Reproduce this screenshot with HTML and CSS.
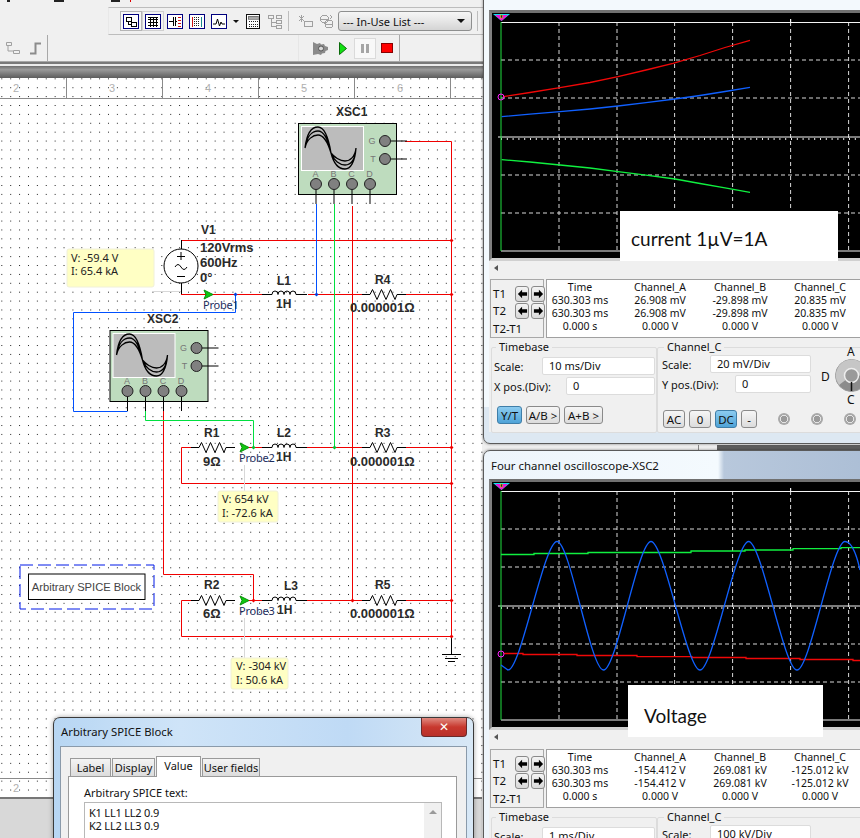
FILE: index.html
```html
<!DOCTYPE html>
<html lang="en">
<head>
<meta charset="utf-8">
<title>Multisim circuit with oscilloscopes</title>
<link rel="stylesheet" href="styles.css">
</head>
<body>
<div class="app">
  <div class="menuline"><i class="mk m1"></i><i class="mk m2"></i><i class="mk m3"></i><i class="mk m4"></i></div>
  <div class="tbar-top">
    <span class="slot pressed"><svg class="ico" viewBox="0 0 16 15"><rect x=".5" y=".5" width="15" height="14" class="ic-nv"/><rect x="3" y="3" width="5" height="4" class="ic-bk"/><rect x="8" y="8" width="5" height="4" class="ic-bk"/><path d="M5 7v3h3" class="ic-ln"/></svg></span>
    <span class="slot pressed lite"><svg class="ico" viewBox="0 0 16 15"><rect x=".5" y=".5" width="15" height="14" class="ic-nv"/><path d="M3 5h10M3 8h10M3 11h10M5 3v10M8 3v10M11 3v10M3 3h10" class="ic-ln"/></svg></span>
    <span class="slot"><svg class="ico" viewBox="0 0 16 15"><rect x=".5" y=".5" width="15" height="14" class="ic-nv"/><path d="M6 3v9M8 3v9M2 7.5h4M8 7.5h2" class="ic-ln"/><path d="M11 3h3M11 6h3M11 9h3M11 12h3" class="ic-rd"/></svg></span>
    <span class="slot"><svg class="ico" viewBox="0 0 16 15"><rect x=".5" y=".5" width="15" height="14" class="ic-nv"/><path d="M3 3v10" class="ic-rd"/><path d="M5.500 3v10M7.500 3v10M9.500 3v10" class="ic-dt"/><path d="M12 3v10" class="ic-bl"/></svg></span>
    <span class="slot"><svg class="ico" viewBox="0 0 16 15"><rect x=".5" y=".5" width="15" height="14" class="ic-nv"/><path d="M2 10h3l1.500-5 2 7 1.500-4 1 2h3" class="ic-wave"/></svg></span>
    <span class="drop"></span>
    <span class="slot"><svg class="ico" viewBox="0 0 16 15"><rect x="1.500" y=".5" width="13" height="14" class="ic-wt"/><rect x="3" y="2" width="10" height="3" class="ic-gy"/><path d="M3.500 7.500h9M3.500 10.500h9M3.500 12.500h9" class="ic-dt"/></svg></span>
    <span class="slot"><svg class="ico" viewBox="0 0 16 15"><path d="M1.500 1.500h5v3h-5zM9.500 1.500h5v3h-5zM9.500 6.500h5v3h-5zM9.500 11h5v3h-5zM4 4.500V12.500h5.500M4 8h5.500" class="ic-off"/></svg></span>
    <span class="sep"></span>
    <span class="slot"><svg class="ico" viewBox="0 0 16 15"><path d="M2 2l5 5M7 2L2 7M4.500 1v7M7 7h8M7 12.500h8M7 7v5.500M15 7v5.500" class="ic-off"/></svg></span>
    <span class="slot"><svg class="ico" viewBox="0 0 16 15"><circle cx="5.500" cy="5" r="4" class="ic-off"/><circle cx="10" cy="10" r="4" class="ic-off"/><path d="M1.500 5h8M6 10h8M11 1l2 2-2 2" class="ic-off"/></svg></span>
    <div class="combo"><span>--- In-Use List ---</span><i class="combo-arrow"></i></div>
    <span class="sep sep-end"></span>
  </div>
  <div class="tbar-row">
    <div class="tb-left">
      <svg class="ico-s" viewBox="0 0 14 13"><path d="M.5.5h5v3h-5zM7.500 8.500h6v3h-6zM2 4v5h5" class="ic-off"/></svg>
      <svg class="ico-s" viewBox="0 0 14 13"><path d="M1 11.500h5.500v-10H12" class="ic-step"/></svg>
    </div>
    <div class="tb-sim">
      <svg class="ico-gear" viewBox="0 0 17 15"><path d="M1 1l4 2 3-1 1 1.500 3-.5 1 2 3 1v3l-2.500 1-.5 2-3 .5-1 1.500-3-1L1 14z" class="gear"/><circle cx="9" cy="7.500" r="2.500" class="gear-c"/></svg>
      <svg class="ico-play" viewBox="0 0 8 13"><path d="M.5.500L7.500 6.500.5 12.500z" class="play"/></svg>
      <span class="pause"><i></i><i></i></span>
      <i class="stop"></i>
    </div>
  </div>
  <div class="tbar-rule"></div>

  <svg class="sheet" viewBox="0 66 860 772" width="860" height="772">
    <defs>
      <pattern id="dots" x="1.300" y="105" width="8.890" height="8.890" patternUnits="userSpaceOnUse"><rect width="1" height="1" class="dot"/></pattern>
      <linearGradient id="strip" x1="0" x2="0" y1="0" y2="1"><stop offset="0" stop-color="#6f6f6f"/><stop offset=".3" stop-color="#9a9a9a"/><stop offset="1" stop-color="#5c5c5c"/></linearGradient>
      <path id="res" d="M0 0H8l2.500-5 4.500 10 4.500-10 4.500 10 4.500-10 4.500 10 2-5H44" class="blk"/>
      <path id="coil" d="M0 0H10a3 3.500 0 0 1 6 0a3 3.500 0 0 1 6 0a3 3.500 0 0 1 6 0a3 3.500 0 0 1 6 0H45" class="blk"/>
      <path id="probe" d="M0-4.500L9 0 0 4.500 2 0z" class="prb"/>
      <path id="node" d="M-2 0L0-2 2 0 0 2z"/>
      <g id="xsc">
        <rect x=".5" y=".5" width="98" height="71" class="xbox"/>
        <rect x="3.500" y="3.500" width="62" height="44" class="xscr"/>
        <path d="M7 25C9 8 15 4 20 4C26 4 30 12 33 30C36 42 42 46 47 46C52 46 57 40 58 25M7 25C9 12 15 8 20 8C26 8 30 16 33 30C36 38 42 42 47 42C52 42 57 38 58 25M7 25C9 16 15 12 20 12C26 12 30 20 33 30C36 34 42 38 47 38C52 38 57 34 58 25" class="xwav"/>
        <text x="17.500" y="54" class="xl">A</text><text x="35.500" y="54" class="xl">B</text><text x="53.500" y="54" class="xl">C</text><text x="71.500" y="54" class="xl">D</text>
        <text x="74" y="21" class="xl">G</text><text x="75" y="39" class="xl">T</text>
        <path d="M18 61V81M36 61V81M54 61V81M72 61V81M87 18h22M87 36h22" class="blk"/>
        <circle cx="18" cy="61" r="5.500" class="xp"/><circle cx="36" cy="61" r="5.500" class="xp"/><circle cx="54" cy="61" r="5.500" class="xp"/><circle cx="72" cy="61" r="5.500" class="xp"/>
        <circle cx="87" cy="18" r="5.500" class="xp"/><circle cx="87" cy="36" r="5.500" class="xp"/>
      </g>
      <g id="al"><path d="M1 6l5-5v3h6v4H6v3z"/></g>
      <g id="ar"><path d="M12 6L7 1v3H1v4h6v3z"/></g>
      <g id="scgrid">
        <path d="M58 0V229M116 0V229M173.600 0V229M231.600 0V229M289.600 0V229M347.600 0V229M0 38H360M0 76H360M0 153H360M0 191H360" class="g-dash"/>
        <path d="M0 .5H360M0 229H360M-3 115H360M289.600-3V0" class="g-sol"/>
        <path d="M0 117H360" class="g-tick"/>
        <path d="M0 0V229" class="g-cur"/>
        <path d="M-8-8H9L.5-1z" class="g-cy"/><path d="M-6-7H7L.5-1z" class="g-mg"/><rect x="-.5" y="-7" width="2" height="3" class="g-yl"/>
      </g>
    </defs>
    <!-- paper -->
    <rect x="0" y="66" width="860" height="12" fill="url(#strip)"/>
    <rect x="0" y="78" width="482" height="700" class="paper"/>
    <rect x="0" y="78" width="720" height="700" fill="url(#dots)"/>
    <rect x="717" y="445" width="143" height="5" class="back"/>
    <path d="M.0 98.500H482M66.500 78V98M162.500 78V98M258.500 78V98M354.500 78V98M450.500 78V98M698.500 445V450" class="rule"/>
    <text x="16" y="92" class="rn">2</text><text x="112" y="92" class="rn">3</text><text x="208" y="92" class="rn">4</text><text x="304" y="92" class="rn">5</text><text x="400" y="92" class="rn">6</text>
    <rect x="0" y="778" width="482" height="20" class="paper"/>
    <rect x="0" y="778" width="482" height="20" fill="url(#dots)"/>
    <path d="M0 778.500H482" class="rule"/>
    <text x="16" y="792" class="rn">2</text>
    <rect x="0" y="798" width="482" height="40" class="botbar"/>
    <path d="M0 798H482" class="botline"/>

    <!-- wiring -->
    <g class="w-r">
      <path d="M181 240.500H451M405 141.500H451.500V636M352.500 206V600.500M181 294.500H262M308 294.500H362M406 294.500H451"/>
      <path d="M191 447.500H181.500V483.500H451M248 447.500H262M307 447.500H362M406 447.500H451"/>
      <path d="M191 600.500H181.500V636.500H451M248 600.500H262M307 600.500H362M406 600.500H451M163.500 411V574.500H253.500V600"/>
    </g>
    <path d="M334.500 204V447M145.500 411V420.500H253.500V447" class="w-g"/>
    <path d="M316.500 204V294M235.500 294V312.500H73.500V411.500H127.500" class="w-b"/>
    <path d="M181.500 240V249M181.500 283V294M451.500 636V654M442 654.500H461M445 658.500H458M448 661.500H455" class="blk"/>

    <use href="#xsc" x="298" y="123"/>
    <use href="#xsc" x="109.500" y="330"/>

    <!-- source -->
    <circle cx="181" cy="266" r="17" class="src"/>
    <path d="M177 256.500h8M181 252v8M177 276.500h8M175 267q3-5 6 0t6 0" class="blk"/>

    <use href="#coil" x="262" y="294.500"/><use href="#res" x="362" y="294.500"/>
    <use href="#res" x="191" y="447.500"/><use href="#coil" x="262" y="447.500"/><use href="#res" x="362" y="447.500"/>
    <use href="#res" x="191" y="600.500"/><use href="#coil" x="262" y="600.500"/><use href="#res" x="362" y="600.500"/>
    <use href="#probe" x="204" y="294.500"/><use href="#probe" x="240" y="447.500"/><use href="#probe" x="240" y="600.500"/>

    <g class="n-r"><use href="#node" x="451.500" y="240.500"/><use href="#node" x="451.500" y="294.500"/><use href="#node" x="451.500" y="447.500"/><use href="#node" x="451.500" y="483.500"/><use href="#node" x="451.500" y="600.500"/><use href="#node" x="451.500" y="636.500"/><use href="#node" x="253.500" y="600.500"/><use href="#node" x="352.500" y="600.500"/></g>
    <g class="n-g"><use href="#node" x="334.500" y="447.500"/><use href="#node" x="253.500" y="447.500"/></g>
    <g class="n-b"><use href="#node" x="316.500" y="294.500"/><use href="#node" x="235.500" y="294.500"/></g>

    <!-- labels -->
    <g class="lb">
      <text x="336" y="116">XSC1</text><text x="147" y="323">XSC2</text>
      <text x="201" y="234">V1</text>
      <text x="204" y="437">R1</text><text x="204" y="589">R2</text>
      <text x="277" y="285">L1</text><text x="277" y="437">L2</text><text x="284" y="590">L3</text>
      <text x="375" y="284">R4</text><text x="375" y="437">R3</text><text x="375" y="589">R5</text>
      <text x="276" y="308">1H</text><text x="276" y="461">1H</text><text x="277" y="614">1H</text>
    </g>
    <g class="lb lb-l">
      <text x="200" y="252">120Vrms</text><text x="200" y="267">600Hz</text><text x="200" y="282">0°</text>
      <text x="203" y="466">9Ω</text><text x="203" y="618">6Ω</text>
      <text x="350" y="312">0.000001Ω</text><text x="350" y="466">0.000001Ω</text><text x="350" y="618">0.000001Ω</text>
    </g>
    <g class="pl"><text x="203" y="309">Probe1</text><text x="239" y="462">Probe2</text><text x="239" y="615">Probe3</text></g>

    <!-- probe callouts -->
    <path d="M153 291.500H181M244.500 465V491M244.500 618V658" class="lead"/>
    <rect x="67" y="249" width="87" height="38" rx="2" class="tip"/>
    <rect x="218" y="491" width="60" height="31" rx="2" class="tip"/>
    <rect x="231" y="658" width="57" height="31" rx="2" class="tip"/>
    <g class="tt">
      <text x="71" y="262">V: -59.4 V</text><text x="71" y="275">I: 65.4 kA</text>
      <text x="222" y="503">V: 654 kV</text><text x="222" y="517">I: -72.6 kA</text>
      <text x="236" y="670">V: -304 kV</text><text x="236" y="684">I: 50.6 kA</text>
    </g>

    <!-- spice block -->
    <rect x="20" y="565" width="134" height="44" class="dash"/>
    <rect x="28.500" y="574" width="116.500" height="25.500" class="spbox"/>
    <text x="86.500" y="591" class="sptext">Arbitrary SPICE Block</text>
  </svg>

  <!-- oscilloscope XSC1 -->
  <section class="scope scope-a">
    <div class="scope-title"></div>
    <div class="scope-client">
      <div class="screen">
        <svg viewBox="492 13 368 245" width="368" height="245">
          <rect x="492" y="13" width="368" height="245" class="sc-bg"/>
          <use href="#scgrid" x="501" y="22"/>
          <path d="M503 96.700L530 92.500 560 87.700 590 82.500 618 76.700 646 70 673 63.300 700 55.500 725 47.500 750 40.300" class="tr-r"/>
          <path d="M501.700 116.700L530 114.200 560 111.700 590 109 618 106 646 102.700 675 99 700 95.500 725 91.500 750 87.300" class="tr-b"/>
          <path d="M501.700 159.700L530 162 560 165 590 168 618 171.700 646 175.200 675 179 700 183.500 725 187.800 750 192.300" class="tr-g"/>
          <circle cx="501" cy="97" r="3" class="tr-m"/>
        </svg>
      </div>
      <div class="hscroll"><i></i></div>
      <div class="readouts">
        <div class="tbox">
          <span class="t-l">T1</span><button class="ab"><svg viewBox="0 0 13 12"><use href="#al"/></svg></button><button class="ab"><svg viewBox="0 0 13 12"><use href="#ar"/></svg></button>
          <span class="t-l">T2</span><button class="ab"><svg viewBox="0 0 13 12"><use href="#al"/></svg></button><button class="ab"><svg viewBox="0 0 13 12"><use href="#ar"/></svg></button>
          <span class="t-l t-w">T2-T1</span>
        </div>
        <div class="table"><div class="tgrid">
          <span>Time</span><span>Channel_A</span><span>Channel_B</span><span>Channel_C</span>
          <span>630.303 ms</span><span>26.908 mV</span><span>-29.898 mV</span><span>20.835 mV</span>
          <span>630.303 ms</span><span>26.908 mV</span><span>-29.898 mV</span><span>20.835 mV</span>
          <span>0.000 s</span><span>0.000 V</span><span>0.000 V</span><span>0.000 V</span>
        </div></div>
      </div>
      <div class="controls">
        <fieldset class="grp grp-tb"><legend>Timebase</legend>
          <div class="frow"><label>Scale:</label><span class="inp inp-w">10 ms/Div</span></div>
          <div class="frow"><label>X pos.(Div):</label><span class="inp">0</span></div>
          <div class="brow"><button class="btn on w25">Y/T</button><button class="btn w34">A/B &gt;</button><button class="btn w39">A+B &gt;</button></div>
        </fieldset>
        <fieldset class="grp grp-ch"><legend>Channel_C</legend>
          <div class="ch-top">
            <div class="ch-fields">
              <div class="frow"><label>Scale:</label><span class="inp inp-w2">20 mV/Div</span></div>
              <div class="frow"><label>Y pos.(Div):</label><span class="inp inp-s">0</span></div>
            </div>
            <div class="selector"><span class="sa">A</span><span class="sd">D</span>
              <svg class="knob" viewBox="0 0 33 33"><circle cx="16.500" cy="16.500" r="16" class="k1"/><path d="M16.500 16.500L4 26A16 16 0 0 1 16.500.5 16 16 0 0 1 32.500 16.500z" class="k2"/><circle cx="16.500" cy="16.500" r="7" class="k3"/><path d="M16.500 23V32" class="k4"/></svg>
              <span class="sc">C</span></div>
          </div>
          <div class="brow brow-c"><button class="btn w22">AC</button><button class="btn w22">0</button><button class="btn on w22">DC</button><button class="btn w16">-</button>
            <i class="rad r1"></i><i class="rad"></i><i class="rad"></i></div>
        </fieldset>
      </div>
    </div>
    <div class="note note-a">current 1µV=1A</div>
  </section>

  <!-- oscilloscope XSC2 -->
  <section class="scope scope-b">
    <div class="scope-title glass">Four channel oscilloscope-XSC2</div>
    <div class="scope-client">
      <div class="screen">
        <svg viewBox="492 482 368 245" width="368" height="245">
          <rect x="492" y="482" width="368" height="245" class="sc-bg"/>
          <use href="#scgrid" x="501" y="491"/>
          <path d="M501 554.500H534V553.500H588V552.500H691V551H745V550H793V548.700H841V547.700H860" class="tr-g"/>
          <path d="M504 653.500H523V654.500H577V655.500H637V656.700H692V657.500H746V658.500H800V659.500H853V660.500H860" class="tr-r"/>
          <path d="M501 665L508 670C521 670 544 541.500 557 541.500C570 541.500 590.500 670 603.500 670C616.500 670 638 541.500 651 541.500C664 541.500 687 670 700 670C713 670 735.600 541.500 748.600 541.500C761.600 541.500 784 670 797 670C810 670 832 541.500 845 541.500C851 541.500 856 552 860 570" class="tr-b"/>
          <circle cx="501" cy="654" r="3" class="tr-m"/>
        </svg>
      </div>
      <div class="hscroll hscroll-b"><i></i></div>
      <div class="readouts">
        <div class="tbox">
          <span class="t-l">T1</span><button class="ab"><svg viewBox="0 0 13 12"><use href="#al"/></svg></button><button class="ab"><svg viewBox="0 0 13 12"><use href="#ar"/></svg></button>
          <span class="t-l">T2</span><button class="ab"><svg viewBox="0 0 13 12"><use href="#al"/></svg></button><button class="ab"><svg viewBox="0 0 13 12"><use href="#ar"/></svg></button>
          <span class="t-l t-w">T2-T1</span>
        </div>
        <div class="table"><div class="tgrid">
          <span>Time</span><span>Channel_A</span><span>Channel_B</span><span>Channel_C</span>
          <span>630.303 ms</span><span>-154.412 V</span><span>269.081 kV</span><span>-125.012 kV</span>
          <span>630.303 ms</span><span>-154.412 V</span><span>269.081 kV</span><span>-125.012 kV</span>
          <span>0.000 s</span><span>0.000 V</span><span>0.000 V</span><span>0.000 V</span>
        </div></div>
      </div>
      <div class="controls">
        <fieldset class="grp grp-tb"><legend>Timebase</legend>
          <div class="frow"><label>Scale:</label><span class="inp inp-w">1 ms/Div</span></div>
        </fieldset>
        <fieldset class="grp grp-ch"><legend>Channel_C</legend>
          <div class="ch-top">
            <div class="ch-fields">
              <div class="frow"><label>Scale:</label><span class="inp inp-w2">100 kV/Div</span></div>
            </div>
          </div>
        </fieldset>
      </div>
    </div>
    <div class="note note-b">Voltage</div>
  </section>

  <!-- properties dialog -->
  <section class="dialog">
    <div class="dlg-title"><span>Arbitrary SPICE Block</span><button class="dlg-close">✕</button></div>
    <div class="dlg-client">
      <div class="tabs"><span class="tab t1">Label</span><span class="tab t2">Display</span><span class="tab active">Value</span><span class="tab t4">User fields</span></div>
      <div class="tabpanel">
        <div class="spice-label">Arbitrary SPICE text:</div>
        <div class="spice-text">
          <div class="spice-lines">K1 LL1 LL2 0.9<br>K2 LL2 LL3 0.9</div>
          <div class="vscroll"><i></i></div>
        </div>
      </div>
    </div>
  </section>
</div>
</body>
</html>
```

FILE: styles.css
```css
* { box-sizing: border-box; }
html, body { margin: 0; padding: 0; }
body { width: 860px; height: 838px; overflow: hidden; background: #f0f0f0; font-family: "Noto Sans", "Open Sans", sans-serif; }
.app { position: relative; width: 860px; height: 838px; overflow: hidden; background: #f0f0f0; display: flex; flex-direction: column; color: #111; }

/* toolbars */
.menuline { height: 7px; position: relative; flex: none; }
.mk { position: absolute; top: 0; height: 2px; background: #222; }
.m1 { left: 7px; width: 3px; } .m2 { left: 54px; width: 10px; } .m3 { left: 111px; width: 9px; } .m4 { left: 130px; width: 1px; background: #d00; }
.tbar-top { flex: none; height: 28px; margin-left: 108px; padding-left: 11px; display: flex; align-items: center; border-top: 1px solid #bdbdbd; border-bottom: 1px solid #bdbdbd; border-left: 1px solid #e8e8e8; }
.slot { width: 22px; height: 20px; display: flex; align-items: center; justify-content: center; border: 1px solid transparent; flex: none; }
.pressed { border: 1px solid #b5b5b5; background: #f6f6f6; }
.lite { background: #f2f2f2; border-color: #d0d0d0; }
.ico { width: 16px; height: 15px; display: block; shape-rendering: crispEdges; }
.drop { width: 0; height: 0; border-left: 3px solid transparent; border-right: 3px solid transparent; border-top: 3px solid #111; margin: 0 3px 0 3px; flex: none; }
.sep { width: 1px; height: 20px; background: #bdbdbd; margin: 0 5px 0 2px; flex: none; }
.sep-end { margin-left: 5px; }
.ic-nv { fill: #fff; stroke: #00007e; stroke-width: 1.500; }
.ic-bk { fill: #fff; stroke: #000; stroke-width: 1; }
.ic-ln { fill: none; stroke: #000; stroke-width: 1; }
.ic-wave { fill: none; stroke: #000; stroke-width: 1; shape-rendering: auto; }
.ic-rd { fill: none; stroke: #d01010; stroke-width: 1; }
.ic-bl { fill: none; stroke: #1a8a8a; stroke-width: 1; }
.ic-dt { fill: none; stroke: #222; stroke-width: 1; stroke-dasharray: 1 1; }
.ic-wt { fill: #fff; stroke: #111; stroke-width: 1; }
.ic-gy { fill: #aaa; stroke: #555; stroke-width: .6; }
.ic-off { fill: none; stroke: #a0a0a0; stroke-width: 1; }
.combo { width: 134px; height: 20px; flex: none; border: 1px solid #8e8f8f; border-radius: 3px; background: linear-gradient(#f6f6f6, #e8e8e8 45%, #d4d4d4); display: flex; align-items: center; justify-content: space-between; padding: 0 6px 0 4px; font-size: 11px; }
.combo-arrow { width: 0; height: 0; border-left: 4px solid transparent; border-right: 4px solid transparent; border-top: 4px solid #111; }
.tbar-row { flex: none; height: 27px; display: flex; border-bottom: 1px solid #a8a8a8; }
.tb-left { width: 48px; border-right: 1px solid #a8a8a8; display: flex; align-items: center; padding-left: 6px; gap: 9px; background: #f0f0f0; }
.ico-s { width: 14px; height: 13px; display: block; }
.ic-step { fill: none; stroke: #8c8c8c; stroke-width: 2; }
.tb-sim { margin-left: 250px; width: 102px; display: flex; align-items: center; border-left: 1px solid #e6e6e6; border-right: 1px solid #a8a8a8; padding-left: 13px; }
.ico-gear { width: 17px; height: 15px; display: block; }
.gear { fill: #8a8a8a; }
.gear-c { fill: #d8d8d8; stroke: #555; stroke-width: 1; }
.ico-play { width: 8px; height: 13px; margin-left: 10px; display: block; }
.play { fill: #11e011; stroke: #0a6a0a; stroke-width: 1; }
.pause { width: 22px; height: 21px; margin-left: 7px; border: 1px solid #dadada; background: #f8f8f8; display: flex; align-items: center; justify-content: center; gap: 2px; }
.pause i { width: 3px; height: 9px; background: #a5a5a5; }
.stop { width: 10px; height: 8px; margin-left: 6px; background: #f00; outline: 1px solid #800; }
.tbar-rule { flex: none; height: 4px; border-top: 2px solid #7a7a7a; background: #ececec; }

/* schematic sheet */
.sheet { display: block; flex: none; }
.paper { fill: #fff; }
.dot { fill: #222; }
.back { fill: #5e5e5e; }
.botbar { fill: #d8d8d8; }
.botline { stroke: #777; stroke-width: 2; }
.rule { stroke: #8a8a8a; stroke-width: 1; fill: none; }
.rn { font: 11px "Liberation Sans", sans-serif; fill: #b0b0b0; text-anchor: middle; }
.blk { fill: none; stroke: #000; stroke-width: 1; }
.w-r { fill: none; stroke: #f00000; stroke-width: 1; }
.w-g { fill: none; stroke: #00e040; stroke-width: 1; }
.w-b { fill: none; stroke: #0050ff; stroke-width: 1; }
.n-r { fill: #f00000; } .n-g { fill: #00c030; } .n-b { fill: #0040e0; }
.xbox { fill: #bedcbe; stroke: #000; stroke-width: 1; }
.xscr { fill: #bcbcbc; stroke: #fff; stroke-width: 1; }
.xwav { fill: none; stroke: #000; stroke-width: 1.300; }
.xl { font: 9px "Liberation Sans", sans-serif; fill: #777; text-anchor: middle; }
.xp { fill: #808080; stroke: #222; stroke-width: 1; }
.src { fill: #fff; stroke: #000; stroke-width: 1; }
.prb { fill: #10c810; stroke: #0a900a; stroke-width: 1; }
.lb text { font: bold 12px "Liberation Sans", sans-serif; fill: #2a2a2a; }
.lb-l text { font-size: 13px; }
.pl text { font: 11px "Noto Sans", sans-serif; fill: #1c2c5c; letter-spacing: -.2px; }
.lead { fill: none; stroke: #d8d8d8; stroke-width: 1; }
.tip { fill: #ffffc4; stroke: #f0f0d8; stroke-width: 1; }
.tt text { font: 11px "Noto Sans", sans-serif; fill: #222; }
.dash { fill: none; stroke: #0018e8; stroke-width: 1; stroke-dasharray: 13 5; }
.spbox { fill: #fff; stroke: #000; stroke-width: 1; }
.sptext { font: 11.200px "Liberation Sans", sans-serif; fill: #444; text-anchor: middle; }

/* oscilloscope windows */
.scope { position: absolute; left: 483px; width: 420px; border: 1px solid #5a5a5a; border-radius: 7px; background: linear-gradient(90deg, #eef5fb 0, #f4fafe 234px, #b8c8dc 240px, #a9bcd4 100%); box-shadow: 0 0 3px rgba(0,0,0,.45); padding: 0 0 11px 5px; display: flex; flex-direction: column; }
.scope-a { top: -19px; height: 463px; background: linear-gradient(#f3f9fd 0, #f3f9fd 425px, #dde8f2 425px); }
.scope-b { top: 450px; height: 470px; }
.scope-title { height: 28px; flex: none; font-size: 11.400px; line-height: 29px; padding-left: 2px; color: #111; }
.scope-client { flex: 1; background: #f0f0f0; display: flex; flex-direction: column; min-height: 0; }
.screen { flex: none; height: 251px; border: 3px solid; border-color: #707070 #c8c8c8 #d0d0d0 #808080; border-right: 0; background: #000; overflow: hidden; }
.screen svg { display: block; }
.sc-bg { fill: #000; }
.g-dash { fill: none; stroke: #d8d8d8; stroke-width: 1; stroke-dasharray: 4 3; }
.g-sol { fill: none; stroke: #f4f4f4; stroke-width: 1.200; }
.g-tick { fill: none; stroke: #e8e8e8; stroke-width: 2; stroke-dasharray: 1 4.800; }
.g-cur { fill: none; stroke: #20e040; stroke-width: 1; }
.g-cy { fill: #10e0f0; } .g-mg { fill: #f010d0; } .g-yl { fill: #222; stroke: #ee0; stroke-width: .5; }
.tr-r, .tr-b, .tr-g { fill: none; stroke-width: 1.300; }
.tr-r { stroke: #f00808; } .tr-b { stroke: #1060ff; } .tr-g { stroke: #10f040; }
.tr-m { fill: none; stroke: #ff20ff; stroke-width: 1; }
.hscroll { flex: none; height: 14px; display: flex; align-items: center; padding-left: 5px; border-bottom: 0; }
.hscroll-b { margin-bottom: 1px; }
.hscroll i { width: 0; height: 0; border-top: 3px solid transparent; border-bottom: 3px solid transparent; border-right: 4px solid #555; }
.readouts { flex: none; height: 59px; margin-top: 4px; margin-left: 1px; display: flex; gap: 2px; }
.tbox { width: 54px; height: 59px; border: 1px solid #a8a8a8; background: #f0f0f0; display: grid; grid-template-columns: 21px 15px 15px; grid-auto-rows: 17px; column-gap: 1px; padding: 6px 0 0 2px; font-size: 11.500px; }
.t-l { line-height: 16px; }
.t-w { grid-column: 1 / -1; line-height: 18px; height: 18px; margin-top: 0; }
.ab { width: 14px; height: 16px; padding: 0; border: 1px solid #8a8a8a; border-radius: 3px; background: linear-gradient(#f4f4f4, #d8d8d8); display: flex; align-items: center; justify-content: center; }
.ab svg { width: 11px; height: 10px; display: block; }
.table { flex: 1; min-width: 0; height: 59px; background: #fff; border: 1px solid #a0a0a0; border-right: 0; overflow: hidden; }
.tgrid { width: 340px; margin-left: -7px; padding-top: 1px; display: grid; grid-template-columns: repeat(4, 80px); grid-auto-rows: 13px; font-size: 10.500px; line-height: 13px; text-align: center; white-space: nowrap; }
.controls { flex: none; display: flex; margin: 2px 0 0 2px; }
.grp { margin: 0; border: 1px solid #dcdcdc; border-radius: 2px; font-size: 11.500px; min-width: 0; flex: none; }
.grp legend { padding: 0 3px; margin-left: 2px; line-height: 14px; font-size: 11px; }
.grp-tb { width: 166px; height: 93px; padding: 3px 1px 0 2px; }
.grp-ch { width: 210px; height: 93px; padding: 1px 0 0 4px; }
.frow { display: flex; height: 18px; margin-bottom: 2px; align-items: center; justify-content: space-between; white-space: nowrap; font-size: 11px; }
.inp { width: 89px; height: 18px; background: #fff; border: 1px solid #dcdcdc; border-radius: 2px; padding-left: 6px; line-height: 16px; font-size: 11px; }
.inp-w { width: 113px; }
.ch-fields { width: 149px; flex: none; }
.inp-w2 { width: 101px; }
.inp-s { width: 76px; }
.brow { display: flex; gap: 4px; margin: 11px 0 0 3px; align-items: center; }
.brow-c { margin: 17px 0 0 1px; }
.btn { height: 18px; padding: 0; font: 11.500px "Noto Sans", sans-serif; color: #111; border: 1px solid #8a8a8a; border-radius: 3px; background: linear-gradient(#f6f6f6, #dcdcdc); white-space: nowrap; }
.on { background: linear-gradient(#8ccbf0, #4fa3d8); border-color: #3f7ea8; }
.w25 { width: 25px; } .w34 { width: 34px; } .w39 { width: 39px; } .w22 { width: 22px; } .w16 { width: 16px; }
.ch-top { display: flex; height: 38px; }
.selector { flex: none; width: 60px; height: 60px; margin: -9px 0 0 10px; display: grid; grid-template-columns: 12px 48px; grid-template-rows: 12px 36px 12px; font-size: 12px; }
.sa { grid-column: 2; grid-row: 1; padding-left: 14px; line-height: 12px; }
.sd { grid-column: 1; grid-row: 2; align-self: center; }
.knob { grid-column: 2; grid-row: 2; width: 33px; height: 33px; margin: 1px 0 0 2px; display: block; }
.sc { grid-column: 2; grid-row: 3; padding-left: 14px; line-height: 12px; }
.k1 { fill: #8c8c8c; stroke: #999; } .k2 { fill: #c6c6c6; } .k3 { fill: #9a9a9a; stroke: #eee; stroke-width: 1.500; } .k4 { stroke: #111; stroke-width: 1.500; }
.rad { width: 12px; height: 12px; border-radius: 50%; margin-left: 17px; background: radial-gradient(circle, #9a9a9a 0 3px, #e4e4e4 3px 4px, #a8a8a8 4px 6px); flex: none; }
.r1 { margin-left: 17px; }
.note { position: absolute; background: #fff; font-family: Lato, "Noto Sans", sans-serif; font-size: 19px; color: #111; display: flex; align-items: flex-start; }
.note-a { left: 136px; top: 229px; width: 218px; height: 50px; padding: 16px 0 0 11px; }
.note-b { left: 144px; top: 234px; width: 195px; height: 52px; padding: 19px 0 0 16px; }

/* dialog */
.dialog { position: absolute; left: 53px; top: 717px; width: 421px; height: 140px; border: 1px solid #3a3a3a; border-radius: 7px 7px 0 0; background: linear-gradient(90deg, #b7d6f3, #cfe4f8 30%, #bfdaf5 70%, #d8e8f6); padding: 0 6px; box-shadow: 0 0 5px rgba(0,0,0,.35); }
.dlg-title { height: 28px; display: flex; align-items: flex-start; justify-content: space-between; font-size: 11.300px; color: #111; }
.dlg-title span { padding: 5px 0 0 1px; line-height: 18px; }
.dlg-close { width: 46px; height: 19px; margin-top: 0; border: 1px solid #6a2a2a; border-top: 0; border-radius: 0 0 4px 4px; background: linear-gradient(#e08a80, #c8382e 50%, #b8302a); color: #fff; font: bold 12px "DejaVu Sans", sans-serif; padding: 0; line-height: 17px; }
.dlg-client { height: 110px; background: #f0f0f0; border: 1px solid #8a9aaa; padding: 10px 9px 0 7px; }
.tabs { display: flex; height: 19px; align-items: flex-end; padding-left: 2px; gap: 1px; font-size: 11px; }
.tab { height: 18px; border: 1px solid #9a9a9a; border-bottom: 0; background: linear-gradient(#f4f4f4, #dcdcdc); line-height: 17px; text-align: center; white-space: nowrap; }
.t1 { width: 41px; } .t2 { width: 43px; } .t4 { width: 58px; }
.active { width: 45px; height: 21px; background: #fff; position: relative; top: 1px; z-index: 1; }
.tabpanel { background: #fff; border: 1px solid #9a9a9a; height: 80px; padding: 8px 0 0 15px; font-size: 11px; }
.spice-label { line-height: 16px; }
.spice-text { width: 358px; height: 60px; margin-top: 1px; border: 1px solid #b8b8b8; display: flex; justify-content: space-between; }
.spice-lines { padding: 3px 0 0 4px; line-height: 13px; letter-spacing: -.2px; }
.vscroll { width: 17px; background: #f0f0f0; display: flex; justify-content: center; padding-top: 7px; }
.vscroll i { width: 0; height: 0; border-left: 4px solid transparent; border-right: 4px solid transparent; border-bottom: 4px solid #9a9a9a; }
```
